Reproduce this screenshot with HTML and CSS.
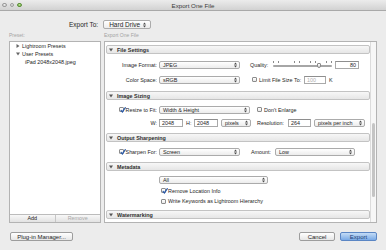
FILE: index.html
```html
<!DOCTYPE html>
<html lang="en">
<head>
    <meta charset="UTF-8">
    <title>Export One File</title>
    <link rel="stylesheet" href="styles.css">
</head>
<body>

<div class="titlebar">
    <div class="lights">
        <span class="light"></span>
        <span class="light"></span>
        <span class="light green"></span>
    </div>
    <div class="title">Export One File</div>
    <div></div>
</div>

<div class="export-to">
    <span class="export-label">Export To:</span>
    <span class="popup popup-drive">Hard Drive
        <svg class="arrows" width="3" height="6" viewBox="0 0 3 6"><path d="M0 2.4L1.5 0.5L3 2.4ZM0 3.6L1.5 5.5L3 3.6Z"/></svg>
    </span>
</div>

<div class="main">
    <div class="presets-col">
        <div class="col-label">Preset:</div>
        <div class="presets-panel">
            <ul class="tree">
                <li><svg class="tri" width="4" height="4" viewBox="0 0 4 4"><path d="M0.5 0L3.5 2L0.5 4Z"/></svg>Lightroom Presets</li>
                <li><svg class="tri" width="4" height="4" viewBox="0 0 4 4"><path d="M0 0.5L4 0.5L2 3.5Z"/></svg>User Presets</li>
                <li class="leaf">iPad 2048x2048.jpeg</li>
            </ul>
            <div class="preset-buttons">
                <span>Add</span>
                <span class="disabled">Remove</span>
            </div>
        </div>
    </div>

    <div class="settings-col">
        <div class="col-label">Export One File</div>
        <div class="settings-panel">
            <div class="sections">

                <div class="section-head"><svg class="disclosure" width="4" height="4" viewBox="0 0 4 4"><path d="M0 0.5L4 0.5L2 3.5Z"/></svg>File Settings</div>
                <div class="section-body file-settings">
                    <div class="row">
                        <span class="row-label">Image Format:</span>
                        <span class="popup popup-mid">JPEG<svg class="arrows" width="3" height="6" viewBox="0 0 3 6"><path d="M0 2.4L1.5 0.5L3 2.4ZM0 3.6L1.5 5.5L3 3.6Z"/></svg></span>
                        <span class="inline-label quality-label">Quality:</span>
                        <span class="slider"><span class="ticks"></span><span class="track"></span><span class="knob"></span></span>
                        <span class="field field-quality">80</span>
                    </div>
                    <div class="row">
                        <span class="row-label">Color Space:</span>
                        <span class="popup popup-mid">sRGB<svg class="arrows" width="3" height="6" viewBox="0 0 3 6"><path d="M0 2.4L1.5 0.5L3 2.4ZM0 3.6L1.5 5.5L3 3.6Z"/></svg></span>
                        <span class="checkbox limit-box"></span>
                        <span class="inline-label limit-label">Limit File Size To:</span>
                        <span class="field field-limit">100</span>
                        <span class="inline-label unit">K</span>
                    </div>
                </div>

                <div class="section-head"><svg class="disclosure" width="4" height="4" viewBox="0 0 4 4"><path d="M0 0.5L4 0.5L2 3.5Z"/></svg>Image Sizing</div>
                <div class="section-body image-sizing">
                    <div class="row">
                        <span class="row-label"><span class="checkbox checked"><svg width="6" height="6" viewBox="0 0 6 6"><path d="M0.8 3.1L2.4 4.9L5.6 0.3"/></svg></span>Resize to Fit:</span>
                        <span class="popup popup-fit">Width &amp; Height<svg class="arrows" width="3" height="6" viewBox="0 0 3 6"><path d="M0 2.4L1.5 0.5L3 2.4ZM0 3.6L1.5 5.5L3 3.6Z"/></svg></span>
                        <span class="checkbox enlarge-box"></span>
                        <span class="inline-label enlarge-label">Don't Enlarge</span>
                    </div>
                    <div class="row">
                        <span class="row-label">W:</span>
                        <span class="field field-size">2048</span>
                        <span class="inline-label h-label">H:</span>
                        <span class="field field-size">2048</span>
                        <span class="popup popup-units">pixels<svg class="arrows" width="3" height="6" viewBox="0 0 3 6"><path d="M0 2.4L1.5 0.5L3 2.4ZM0 3.6L1.5 5.5L3 3.6Z"/></svg></span>
                        <span class="inline-label res-label">Resolution:</span>
                        <span class="field field-res">264</span>
                        <span class="popup popup-ppi">pixels per inch<svg class="arrows" width="3" height="6" viewBox="0 0 3 6"><path d="M0 2.4L1.5 0.5L3 2.4ZM0 3.6L1.5 5.5L3 3.6Z"/></svg></span>
                    </div>
                </div>

                <div class="section-head"><svg class="disclosure" width="4" height="4" viewBox="0 0 4 4"><path d="M0 0.5L4 0.5L2 3.5Z"/></svg>Output Sharpening</div>
                <div class="section-body sharpening">
                    <div class="row">
                        <span class="row-label"><span class="checkbox checked"><svg width="6" height="6" viewBox="0 0 6 6"><path d="M0.8 3.1L2.4 4.9L5.6 0.3"/></svg></span>Sharpen For:</span>
                        <span class="popup popup-mid">Screen<svg class="arrows" width="3" height="6" viewBox="0 0 3 6"><path d="M0 2.4L1.5 0.5L3 2.4ZM0 3.6L1.5 5.5L3 3.6Z"/></svg></span>
                        <span class="inline-label amount-label">Amount:</span>
                        <span class="popup popup-amount">Low<svg class="arrows" width="3" height="6" viewBox="0 0 3 6"><path d="M0 2.4L1.5 0.5L3 2.4ZM0 3.6L1.5 5.5L3 3.6Z"/></svg></span>
                    </div>
                </div>

                <div class="section-head"><svg class="disclosure" width="4" height="4" viewBox="0 0 4 4"><path d="M0 0.5L4 0.5L2 3.5Z"/></svg>Metadata</div>
                <div class="section-body metadata">
                    <div class="row">
                        <span class="row-label"></span>
                        <span class="popup popup-meta">All<svg class="arrows" width="3" height="6" viewBox="0 0 3 6"><path d="M0 2.4L1.5 0.5L3 2.4ZM0 3.6L1.5 5.5L3 3.6Z"/></svg></span>
                    </div>
                    <div class="row meta-option">
                        <span class="checkbox checked"><svg width="6" height="6" viewBox="0 0 6 6"><path d="M0.8 3.1L2.4 4.9L5.6 0.3"/></svg></span>
                        <span class="inline-label">Remove Location Info</span>
                    </div>
                    <div class="row meta-option short">
                        <span class="checkbox"></span>
                        <span class="inline-label">Write Keywords as Lightroom Hierarchy</span>
                    </div>
                </div>

                <div class="section-head"><svg class="disclosure" width="4" height="4" viewBox="0 0 4 4"><path d="M0 0.5L4 0.5L2 3.5Z"/></svg>Watermarking</div>
                <div class="section-body"></div>

            </div>
            <div class="scrollbar"><div class="thumb"></div></div>
        </div>
    </div>
</div>

<div class="footer">
    <span class="button plugin-btn">Plug-in Manager...</span>
    <span class="button cancel-btn">Cancel</span>
    <span class="button export-btn">Export</span>
</div>

</body>
</html>
```

FILE: styles.css
```css
/* General Styles */
* {
    box-sizing: border-box;
    margin: 0;
    padding: 0;
}

body {
    width: 386px;
    height: 250px;
    overflow: hidden;
    background: #ececec;
    font-family: "Liberation Sans", Arial, sans-serif;
    font-size: 5.4px;
    color: #262626;
}

/* Title bar */
.titlebar {
    display: grid;
    grid-template-columns: 1fr auto 1fr;
    align-items: center;
    height: 11px;
    background: linear-gradient(#ececec, #d2d2d2);
    border-bottom: 1px solid #a9a9a9;
}

.lights {
    display: flex;
    gap: 3px;
    padding-left: 2px;
}

.light {
    width: 4.5px;
    height: 4.5px;
    border-radius: 50%;
    background: radial-gradient(circle at 50% 35%, #f2f2f2, #c4c4c4);
    border: 0.5px solid #9c9c9c;
}

.light.green {
    background: radial-gradient(circle at 50% 35%, #c6ea9a, #6fae45);
    border-color: #5d8f3c;
}

.title {
    font-size: 6.2px;
    color: #3a3a3a;
}

/* Export To */
.export-to {
    display: flex;
    align-items: center;
    height: 9px;
    margin: 9px 0 0 69px;
    gap: 5px;
}

.export-label {
    font-size: 6.5px;
}

/* Popups */
.popup {
    display: flex;
    align-items: center;
    justify-content: space-between;
    height: 8px;
    padding: 0 2px 0 3px;
    border: 1px solid #ababab;
    border-radius: 2px;
    background: linear-gradient(#ffffff, #ececec);
    white-space: nowrap;
    flex-shrink: 0;
}

.popup .arrows {
    fill: #4a4a4a;
    margin-left: 2px;
}

.popup-drive {
    width: 48px;
    height: 9px;
    font-size: 6.5px;
    padding: 0 4px 0 5px;
}

.popup-mid { width: 81px; }
.popup-fit { width: 91px; }
.popup-units { width: 30px; margin-left: 3px; }
.popup-ppi { width: 51px; margin-left: 3px; }
.popup-amount { width: 80px; }
.popup-meta { width: 109px; }

/* Columns */
.main {
    display: flex;
    gap: 3px;
    margin: 2px 0 0 9px;
}

.col-label {
    height: 8px;
    line-height: 8px;
    margin-bottom: 2px;
    font-size: 5px;
    color: #a3a3a3;
}

.presets-col {
    width: 92px;
}

.presets-panel {
    display: flex;
    flex-direction: column;
    height: 182px;
    background: #fff;
    border: 1px solid #b3b3b3;
}

.tree {
    flex: 1;
    list-style: none;
    padding: 0 0 0 6px;
}

.tree li {
    display: flex;
    align-items: center;
    height: 8px;
    gap: 2px;
    white-space: nowrap;
}

.tree .tri {
    fill: #666;
}

.tree li.leaf {
    padding-left: 9px;
}

.preset-buttons {
    display: flex;
    height: 8px;
    border-top: 1px solid #bcbcbc;
    background: linear-gradient(#f8f8f8, #e2e2e2);
}

.preset-buttons span {
    flex: 1;
    text-align: center;
    line-height: 7px;
}

.preset-buttons span + span {
    border-left: 1px solid #c6c6c6;
}

.preset-buttons .disabled {
    color: #a8a8a8;
}

/* Settings panel */
.settings-col {
    width: 273px;
}

.settings-panel {
    display: flex;
    height: 182px;
    background: #fff;
    border: 1px solid #b3b3b3;
    overflow: hidden;
}

.sections {
    width: 265px;
    padding: 3px 0 0 1px;
}

.section-head {
    display: flex;
    align-items: center;
    height: 9px;
    padding-left: 2px;
    gap: 4px;
    border: 1px solid #c3c3c3;
    border-radius: 2px;
    background: linear-gradient(#f7f7f7, #e6e6e6);
    font-weight: bold;
    color: #2e2e2e;
}

.disclosure {
    fill: #555;
}

.section-body {
    display: flex;
    flex-direction: column;
}

.file-settings { padding: 6px 0 7px; gap: 6px; }
.image-sizing { padding: 5px 0 6px; gap: 4px; }
.sharpening { padding: 5px 0 6px; }
.metadata { padding: 4px 0 5px; gap: 2px; }

.row {
    display: flex;
    align-items: center;
    height: 9px;
    white-space: nowrap;
}

.row.short {
    height: 8px;
}

.row-label {
    display: flex;
    align-items: center;
    justify-content: flex-end;
    gap: 2px;
    width: 51px;
    margin-right: 2px;
    flex-shrink: 0;
}

.inline-label {
    flex-shrink: 0;
}

.quality-label { width: 23px; margin-left: 10px; }
.limit-label { width: 43px; margin-left: 2px; }
.unit { margin-left: 3px; }
.enlarge-label { margin-left: 2px; }
.h-label { width: 8px; margin-left: 3px; }
.res-label { width: 29px; margin-left: 6px; margin-right: 2px; }
.amount-label { width: 22px; margin-left: 11px; margin-right: 2px; }

/* Fields */
.field {
    display: block;
    height: 8px;
    line-height: 7px;
    padding: 0 2px;
    border: 1px solid #a9a9a9;
    border-top-color: #8e8e8e;
    background: #fff;
    flex-shrink: 0;
}

.field-quality { width: 24px; text-align: right; }
.field-limit { width: 22px; margin-left: 2px; color: #b0b0b0; }
.field-size { width: 24px; }
.field-res { width: 23px; }

/* Checkboxes */
.checkbox {
    position: relative;
    width: 5px;
    height: 5px;
    border: 0.5px solid #8c8c8c;
    border-radius: 1px;
    background: linear-gradient(#fff, #e9e9e9);
    flex-shrink: 0;
}

.checkbox svg {
    position: absolute;
    left: 0;
    top: -1.5px;
    fill: none;
    stroke: #2b5aa8;
    stroke-width: 1.3;
}

.limit-box { margin-left: 12px; }
.enlarge-box { margin-left: 7px; }

.meta-option {
    padding-left: 55px;
    gap: 2px;
}

/* Slider */
.slider {
    position: relative;
    width: 59px;
    height: 9px;
    margin-right: 3px;
    flex-shrink: 0;
}

.ticks {
    position: absolute;
    left: 0;
    right: 0;
    top: 1px;
    height: 2px;
    background: repeating-linear-gradient(90deg, #8a8a8a 0, #8a8a8a 0.6px, transparent 0.6px, transparent 5.3px);
}

.track {
    position: absolute;
    left: 0;
    right: 0;
    top: 5px;
    height: 1.5px;
    border-radius: 1px;
    background: #a6a6a6;
}

.knob {
    position: absolute;
    left: 44px;
    top: 3px;
    width: 4px;
    height: 5px;
    border: 0.5px solid #8a8a8a;
    border-radius: 1px 1px 2px 2px;
    background: linear-gradient(#ffffff, #d8d8d8);
}

/* Scrollbar */
.scrollbar {
    flex: 1;
    position: relative;
    border-left: 1px solid #dcdcdc;
    background: #f7f7f7;
}

.thumb {
    position: absolute;
    left: 1px;
    right: 1px;
    top: 81px;
    height: 74px;
    border-radius: 2px;
    background: #c4c4c4;
}

/* Footer */
.footer {
    display: flex;
    align-items: center;
    height: 9px;
    margin: 9px 9px 0 10px;
}

.button {
    height: 9px;
    line-height: 8px;
    text-align: center;
    font-size: 6px;
    border: 1px solid #9d9d9d;
    border-radius: 2px;
    background: linear-gradient(#ffffff, #e6e6e6);
    white-space: nowrap;
}

.plugin-btn { width: 63px; }
.cancel-btn { width: 36px; margin-left: auto; }

.export-btn {
    width: 37px;
    margin-left: 5px;
    border-color: #5b86c4;
    background: linear-gradient(#c4dcf6, #7aaae6);
    color: #1f3f73;
}
```
